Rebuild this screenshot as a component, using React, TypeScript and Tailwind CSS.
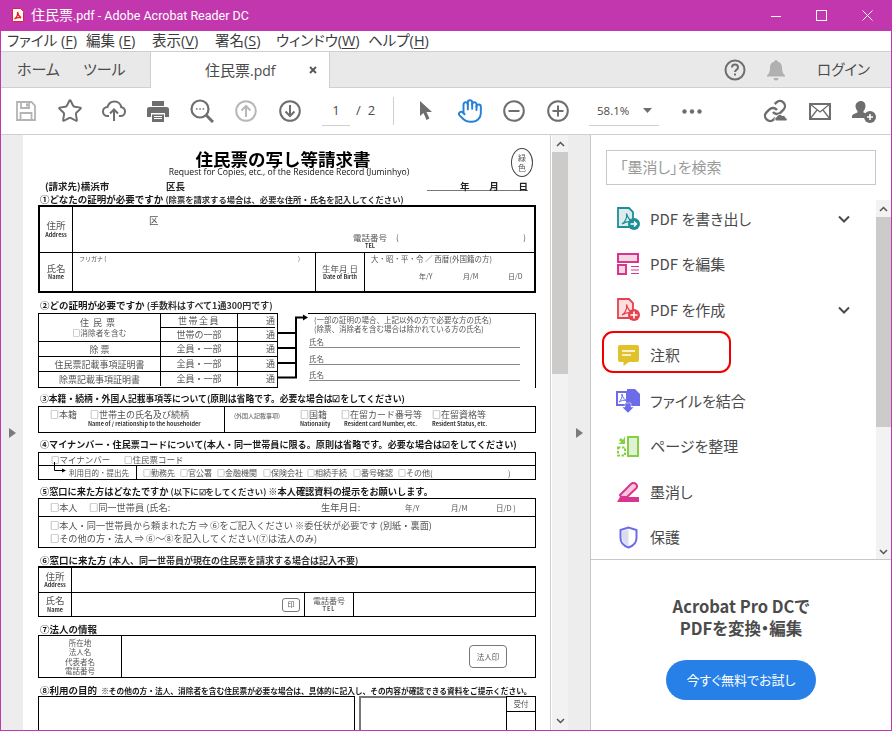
import { Star, Hand } from "lucide-react";
import type { ReactNode } from "react";

const uiFont = "font-['Open_Sans','Noto_Sans_CJK_JP',sans-serif] [font-feature-settings:'palt']";

const menus: { label: string; key: string; width: string }[] = [
  { label: "ファイル (", key: "F", width: "w-[79px]" },
  { label: "編集 (", key: "E", width: "w-[66px]" },
  { label: "表示(", key: "V", width: "w-[63px]" },
  { label: "署名(", key: "S", width: "w-[61px]" },
  { label: "ウィンドウ(", key: "W", width: "w-[92px]" },
  { label: "ヘルプ(", key: "H", width: "w-[60px]" },
];

function Swoosh({ color }: { color: string }) {
  return <path d="M9.500 6.500c1 5-2 9-4.500 10.500 3-2 6.500-3 10-2.500-2.500-1.500-4.500-4.500-5.500-8z" fill="none" stroke={color} strokeWidth="1.200" />;
}

function ToolSlot({ children }: { children: ReactNode }) {
  return <div className="flex h-full w-[44px] shrink-0 items-center justify-center">{children}</div>;
}

function TitleBar() {
  return (
    <div className="flex h-[31px] items-center bg-[#c237ae] text-white">
      <svg className="ml-[11px] mt-[-1px]" width="12" height="14" viewBox="0 0 12 14">
        <path d="M0.500 0.500h8l3 3v10h-11z" fill="#fff" stroke="#e8222a" />
        <path d="M5.500 4c.6 3-1 5.500-3 7 2-1.300 4-1.800 6.500-1.300-1.700-1-3-3-3.500-5.700z" fill="none" stroke="#e8222a" strokeWidth="1.400" />
      </svg>
      <span className="ml-[7px] font-['Roboto','Noto_Sans_CJK_JP',sans-serif] text-[12.500px] leading-none">
        <span className="text-[14px]">住民票</span>.pdf - Adobe Acrobat Reader DC
      </span>
      <div className="ml-auto mr-[18px] flex items-center">
        <svg width="10" height="10" viewBox="0 0 10 10"><path d="M0 5.500h10" stroke="#fff" /></svg>
        <svg className="ml-[35px]" width="11" height="11" viewBox="0 0 11 11"><rect x="0.500" y="0.500" width="10" height="10" fill="none" stroke="#fff" /></svg>
        <svg className="ml-[35px]" width="11" height="11" viewBox="0 0 11 11"><path d="M0.500 0.500l10 10M10.500 0.500l-10 10" stroke="#fff" /></svg>
      </div>
    </div>
  );
}

function MenuBar() {
  return (
    <div className="flex h-[20px] items-center bg-white pl-[6px] text-[14.500px] leading-none text-[#3c3c3c]">
      {menus.map((m) => (
        <span className={`${m.width} shrink-0 whitespace-nowrap`} key={m.key}>
          {m.label}
          <span className="underline underline-offset-2">{m.key}</span>)
        </span>
      ))}
    </div>
  );
}

function TabBar() {
  return (
    <div className="flex h-[37px] border-t border-t-[#cfcfcf] bg-[#e9e9e9]">
      <div className="flex w-[149px] items-center border-b border-b-[#cfcfcf] pl-[16px] text-[15px] text-[#4b4b4b]">
        <span className="w-[66px]">ホーム</span>
        <span>ツール</span>
      </div>
      <div className="flex w-[180px] items-center border-x border-x-[#cfcfcf] bg-white pl-[54px] text-[15px] text-[#4b4b4b]">
        <span>住民票<span className="text-[14px]">.pdf</span></span>
        <svg className="ml-[33px]" width="8" height="8" viewBox="0 0 8 8"><path d="M1 1l6 6M7 1l-6 6" stroke="#555" strokeWidth="1.800" /></svg>
      </div>
      <div className="flex flex-1 items-center border-b border-b-[#cfcfcf] text-[15px] text-[#4b4b4b]">
        <svg className="ml-[394px]" width="22" height="22" viewBox="0 0 22 22">
          <circle cx="11" cy="11" r="9.500" fill="none" stroke="#6e6e6e" strokeWidth="2" />
          <path d="M8 8.500c0-4 6-4 6 0 0 2.500-3 2.300-3 4.500" fill="none" stroke="#6e6e6e" strokeWidth="2" />
          <rect x="10" y="14.500" width="2" height="2" fill="#6e6e6e" />
        </svg>
        <svg className="ml-[21px]" width="18" height="22" viewBox="0 0 18 22">
          <path d="M9 1c1 0 1.500.7 1.500 1.500C14 3.500 15 6 15 9c0 4 1 5.500 3 7.500v1H0v-1c2-2 3-3.500 3-7.500 0-3 1-5.500 4.500-6.500C7.500 1.700 8 1 9 1z" fill="#b0b0b0" />
          <path d="M6.500 19h5c0 1.500-1 2.500-2.500 2.500S6.500 20.500 6.500 19z" fill="#b0b0b0" />
        </svg>
        <span className="ml-[32px] whitespace-nowrap text-[14.500px]">ログイン</span>
      </div>
    </div>
  );
}

function Toolbar() {
  const gray = "#6e6e6e";
  return (
    <div className="flex h-[47px] border-b border-b-[#cfcfcf] bg-white pl-[3px]">
      <ToolSlot>
        <svg width="20" height="20" viewBox="0 0 20 20">
          <path d="M1 1h14.500L19 4.500V19H1z" fill="none" stroke="#b4b4b4" strokeWidth="1.800" />
          <path d="M5 1v6h8V1M4.500 19v-7h11v7" fill="none" stroke="#b4b4b4" strokeWidth="1.800" />
          <rect x="10" y="2.500" width="2" height="3" fill="#b4b4b4" />
        </svg>
      </ToolSlot>
      <ToolSlot><Star size={26} strokeWidth={1.800} color={gray} /></ToolSlot>
      <ToolSlot>
        <svg width="24" height="22" viewBox="0 0 24 22">
          <path d="M7 16H5.500C3 16 1 14 1 11.500S3 7 5.500 7C6.500 3.500 9 1.500 12.500 1.500c3.700 0 6.300 2.500 6.700 5.700 2.300.3 3.800 2 3.800 4.300 0 2.500-2 4.500-4.500 4.500H17" fill="none" stroke={gray} strokeWidth="2" />
          <path d="M12 21V10M8 13.500L12 9.500l4 4" fill="none" stroke={gray} strokeWidth="2" />
        </svg>
      </ToolSlot>
      <ToolSlot>
        <svg width="22" height="21" viewBox="0 0 22 21">
          <path d="M5 0h12v5H5z" fill={gray} />
          <path d="M2.500 6h17A2.500 2.500 0 0 1 22 8.500V16h-4v-4H4v4H0V8.500A2.500 2.500 0 0 1 2.500 6z" fill={gray} />
          <path d="M5 13.500h12V21H5z" fill={gray} />
          <path d="M7 15.500h8M7 17.500h8" stroke="#fff" />
        </svg>
      </ToolSlot>
      <ToolSlot>
        <svg width="24" height="24" viewBox="0 0 24 24">
          <circle cx="10" cy="10" r="8.500" fill="none" stroke={gray} strokeWidth="2.200" />
          <path d="M16 16l7 7" stroke={gray} strokeWidth="3" />
          <path d="M6 10h1.500M9.300 10h1.500M12.600 10h1.500" stroke={gray} strokeWidth="1.500" />
        </svg>
      </ToolSlot>
      <ToolSlot>
        <svg width="22" height="22" viewBox="0 0 22 22">
          <circle cx="11" cy="11" r="9.800" fill="none" stroke="#b8b8b8" strokeWidth="2" />
          <path d="M11 17V6M6.500 10.500L11 6l4.500 4.500" fill="none" stroke="#b8b8b8" strokeWidth="2" />
        </svg>
      </ToolSlot>
      <ToolSlot>
        <svg width="22" height="22" viewBox="0 0 22 22">
          <circle cx="11" cy="11" r="9.800" fill="none" stroke={gray} strokeWidth="2" />
          <path d="M11 5v11M6.500 11.500L11 16l4.500-4.500" fill="none" stroke={gray} strokeWidth="2" />
        </svg>
      </ToolSlot>
      <div className="flex h-full w-[81px] shrink-0 items-center text-[13px] text-[#4b4b4b]">
        <div className="ml-[10px] mt-[1px] flex h-[28px] w-[28px] items-center justify-center border-b border-b-[#cfcfcf] pb-[1px]">1</div>
        <span className="ml-[6px]">/</span>
        <span className="ml-[7px]">2</span>
      </div>
      <div className="my-[9px] w-px shrink-0 bg-[#cfcfcf]" />
      <div className="w-[10px] shrink-0" />
      <ToolSlot>
        <svg width="14" height="20" viewBox="0 0 14 20"><path d="M1 0v15l3.500-3 3 7 3-1.500-3-6.500H13z" fill={gray} /></svg>
      </ToolSlot>
      <ToolSlot><Hand size={26} strokeWidth={1.800} color="#2680d8" /></ToolSlot>
      <ToolSlot>
        <svg width="22" height="22" viewBox="0 0 22 22">
          <circle cx="11" cy="11" r="9.800" fill="none" stroke={gray} strokeWidth="2" />
          <path d="M5.500 11h11" stroke={gray} strokeWidth="2" />
        </svg>
      </ToolSlot>
      <ToolSlot>
        <svg width="22" height="22" viewBox="0 0 22 22">
          <circle cx="11" cy="11" r="9.800" fill="none" stroke={gray} strokeWidth="2" />
          <path d="M5.500 11h11M11 5.500v11" stroke={gray} strokeWidth="2" />
        </svg>
      </ToolSlot>
      <div className="flex h-full w-[90px] shrink-0 items-center">
        <div className="ml-[9px] mt-[1px] flex h-[28px] w-[70px] items-center border-b border-b-[#cfcfcf] pb-[1px] pl-[8px] text-[11.500px] text-[#4b4b4b]">
          58.1%
          <svg className="ml-[14px]" width="9" height="5" viewBox="0 0 9 5"><path d="M0 0h9L4.500 5z" fill={gray} /></svg>
        </div>
      </div>
      <ToolSlot>
        <svg width="20" height="5" viewBox="0 0 20 5">
          <circle cx="2.500" cy="2.500" r="2.200" fill={gray} />
          <circle cx="10" cy="2.500" r="2.200" fill={gray} />
          <circle cx="17.500" cy="2.500" r="2.200" fill={gray} />
        </svg>
      </ToolSlot>
      <div className="w-[40px] shrink-0" />
      <ToolSlot>
        <svg width="26" height="24" viewBox="0 0 26 24">
          <g fill="none" stroke={gray} strokeWidth="2.400">
            <path d="M10 13a5 5 0 0 0 7.540.54l3-3a5 5 0 0 0-7.070-7.070l-1.720 1.710" />
            <path d="M14 11a5 5 0 0 0-7.540-.54l-3 3a5 5 0 0 0 7.070 7.070l1.710-1.710" />
          </g>
          <path d="M14 22c-2.500 0-3-3.500-.5-4 .5-2.500 4-3.500 5.500-1.500 1.500-.5 3.500.5 3.500 2 2 .3 2.500 3.500 0 3.500z" fill={gray} stroke="#fff" />
        </svg>
      </ToolSlot>
      <ToolSlot>
        <svg width="22" height="17" viewBox="0 0 22 17">
          <rect x="1" y="1" width="20" height="15" fill="none" stroke={gray} strokeWidth="2" />
          <path d="M1 1l10 8 10-8M1 16l7-9M21 16l-7-9" fill="none" stroke={gray} strokeWidth="1.300" />
        </svg>
      </ToolSlot>
      <ToolSlot>
        <svg width="24" height="23" viewBox="0 0 24 23">
          <path d="M9 1c3 0 4.500 2.500 4.500 5 0 2-1 4-2 5v1.500l2.500 1c-1.500 1.500-1.800 3-1.500 4.500H0v-2c0-1.500 4-3 5.500-3.500V11c-1-1-2-3-2-5 0-2.500 2.500-5 5.500-5z" fill={gray} />
          <circle cx="18" cy="17" r="6" fill={gray} />
          <path d="M15 17h6M18 14v6" stroke="#fff" strokeWidth="1.600" />
        </svg>
      </ToolSlot>
    </div>
  );
}

function SideArrow() {
  return <svg width="7" height="10" viewBox="0 0 7 10"><path d="M0 0l7 5-7 5z" fill="#7a7a7a" /></svg>;
}

function Heading({ children, className = "" }: { children: ReactNode; className?: string }) {
  return <div className={`whitespace-nowrap pl-[2px] font-bold leading-none text-[#1a1a1a] ${className}`}>{children}</div>;
}

function Small({ children, className = "text-[8.300px]" }: { children: ReactNode; className?: string }) {
  return <span className={`${className} font-semibold text-[#333]`}>{children}</span>;
}

function Label({ ja, en }: { ja: string; en: string }) {
  return (
    <div className="flex flex-col items-center leading-none">
      <span className="text-[9.500px] text-[#555]">{ja}</span>
      <span className="mt-[2px] text-[5.500px] font-bold text-[#333]">{en}</span>
    </div>
  );
}

function En({ children, className = "" }: { children: ReactNode; className?: string }) {
  return <span className={`mt-[3px] block whitespace-nowrap text-[5.500px] font-bold text-[#333] ${className}`}>{children}</span>;
}

function LeftRow({ name, who }: { name: string; who: string }) {
  return (
    <div className="flex h-[15px] border-t border-t-black">
      <div className="flex w-[122px] items-center justify-center border-r border-r-black text-[9px] leading-none text-[#555]">{name}</div>
      <div className="flex w-[77px] items-center justify-center border-r border-r-black text-[9px] text-[#555]">{who}</div>
      <div className="flex flex-1 items-center justify-end pr-[2px] text-[9px] text-[#555]">通</div>
    </div>
  );
}

function NameLine() {
  return <div className="ml-[1px] mr-[15px] h-[15px] border-b border-b-[#888] pt-[4px] text-[7.500px] leading-[10px] text-[#555]">氏名</div>;
}

function Document() {
  return (
    <div className="h-full w-[527px] shrink-0 overflow-hidden bg-white pl-[15px] blur-[0.3px] [font-feature-settings:normal]">
      <div className="flex h-[46px] w-[498px] pt-[15px]">
        <div className="flex w-[473px] flex-col items-center pl-[17px] leading-none">
          <span className="text-[17.500px] font-bold text-black">住民票の写し等請求書</span>
          <span className="whitespace-nowrap pl-[12px] font-['Open_Sans'] text-[8.600px] font-medium text-[#111]">Request for Copies, etc., of the Residence Record (Juminhyo)</span>
        </div>
        <div className="mt-[-2px] flex h-[29px] w-[22px] flex-col items-center justify-center rounded-[50%] border border-[#444] text-[8px] leading-[10px] text-[#555]">
          <span>緑</span>
          <span>色</span>
        </div>
      </div>
      <div className="flex h-[14px] w-[498px] items-start text-[9.500px] font-bold leading-[10px] text-[#222]">
        <span className="ml-[7px] w-[121px]">(請求先)横浜市</span>
        <span className="w-[261px]">区長</span>
        <div className="flex h-[10px] w-[101px] justify-between border-b border-b-[#777] pl-[33px]">
          <span>年</span><span>月</span><span>日</span>
        </div>
      </div>
      <Heading className="h-[10px] text-[9.500px]">①どなたの証明が必要ですか <Small>(除票を請求する場合は、必要な住所・氏名を記入してください)</Small></Heading>
      <div className="w-[498px] border-2 border-black">
        <div className="flex h-[46px] border-b border-b-black">
          <div className="flex w-[33px] items-center justify-center border-r border-r-black"><Label ja="住所" en="Address" /></div>
          <div className="flex-1 text-[#555]">
            <span className="ml-[76px] mt-[9px] block text-[9.500px] leading-none">区</span>
            <div className="ml-[279px] mt-[7px] flex">
              <div className="flex w-[36px] flex-col items-center leading-none">
                <span className="whitespace-nowrap text-[8.500px]">電話番号</span>
                <span className="mt-[3px] text-[5.500px] font-bold text-[#333]">TEL</span>
              </div>
              <div className="ml-[8px] flex w-[130px] justify-between text-[8px] leading-none"><span>(</span><span>)</span></div>
            </div>
          </div>
        </div>
        <div className="flex h-[38px]">
          <div className="flex w-[33px] items-center justify-center border-r border-r-black"><Label ja="氏名" en="Name" /></div>
          <div className="flex w-[243px] justify-between border-r border-r-black pl-[6px] pr-[15px] pt-[1px] text-[6px] leading-[10px] text-[#555]">
            <span>フリガナ (</span><span>)</span>
          </div>
          <div className="flex w-[49px] flex-col items-center justify-center border-r border-r-black leading-none">
            <span className="text-[8.500px] text-[#555]">生年月 日</span>
            <span className="mt-[3px] whitespace-nowrap text-[5.500px] font-bold text-[#333]">Date of Birth</span>
          </div>
          <div className="flex-1 pl-[6px] pt-[1px] text-[#555]">
            <div className="whitespace-nowrap text-[7.500px] leading-[10px]">大・昭・平・令 ／ 西暦(外国籍の方)</div>
            <div className="mt-[9px] flex pl-[48px] text-[7px] leading-none">
              <span className="w-[44px]">年/Y</span>
              <span className="w-[45px]">月/M</span>
              <span>日/D</span>
            </div>
          </div>
        </div>
      </div>

      <Heading className="mt-[8px] h-[12px] text-[9.500px]">②どの証明が必要ですか <Small className="text-[9px]">(手数料はすべて1通300円です)</Small></Heading>
      <div className="flex h-[75px] w-[498px]">
        <div className="w-[240px] border-x border-b border-x-black border-b-black">
          <div className="flex h-[28px] border-t border-t-black">
            <div className="flex w-[122px] flex-col items-center justify-center border-r border-r-black leading-none text-[#555]">
              <span className="text-[9px] tracking-[4px]">住民票</span>
              <span className="mt-[2px] text-[7.700px]">□消除者を含む</span>
            </div>
            <div className="w-[77px] border-r border-r-black text-center text-[9px] leading-[13px] text-[#555]">
              <div className="h-[14px] border-b border-b-black tracking-[1.500px]">世帯全員</div>
              <div>世帯の一部</div>
            </div>
            <div className="flex-1 pr-[2px] text-right text-[9px] leading-[13px] text-[#555]">
              <div className="h-[14px] border-b border-b-black">通</div>
              <div>通</div>
            </div>
          </div>
          <LeftRow name="除 票" who="全員・一部" />
          <LeftRow name="住民票記載事項証明書" who="全員・一部" />
          <LeftRow name="除票記載事項証明書" who="全員・一部" />
        </div>
        <svg className="shrink-0" width="30" height="75" viewBox="0 0 30 75">
          <path d="M0 20h18M0 35h18M0 50h18M0 64.500h18M18 65.500V4.500h8" fill="none" stroke="#000" strokeWidth="2" />
          <path d="M25 1.500l5 3-5 3z" fill="#000" />
        </svg>
        <div className="flex-1 border-r border-t border-black">
          <div className="pl-[6px] pt-[1px] text-[7.500px] leading-[9px] text-[#555]">
            <div className="whitespace-nowrap">(一部の証明の場合、上記以外の方で必要な方の氏名)</div>
            <div className="whitespace-nowrap">(除票、消除者を含む場合は除かれている方の氏名)</div>
          </div>
          <NameLine />
          <div className="mt-[2px]"><NameLine /></div>
          <div className="mt-[1px]"><NameLine /></div>
        </div>
      </div>

      <Heading className="mt-[7px] h-[11px] text-[8.800px]">③本籍・続柄・外国人記載事項等について(原則は省略です。必要な場合は☑をしてください)</Heading>
      <div className="flex h-[27px] w-[498px] border border-black text-[9px] leading-none text-[#555]">
        <div className="w-[186px] border-r border-r-black pl-[11px] pt-[3px]">
          <span>□本籍</span>
          <span className="ml-[13px]">□世帯主の氏名及び続柄</span>
          <En className="ml-[38px]">Name of / relationship to the householder</En>
        </div>
        <div className="flex flex-1 pl-[9px] pt-[3px]">
          <span className="w-[48px] whitespace-nowrap pt-[3px] text-[6px]">(外国人記載事項)</span>
          <div className="ml-[18px] w-[40px]">□国籍<En>Nationality</En></div>
          <div className="w-[92px] pl-[1px]">□在留カード番号等<En className="pl-[3px]">Resident card Number, etc.</En></div>
          <div>□在留資格等<En>Resident Status, etc.</En></div>
        </div>
      </div>

      <Heading className="mt-[7px] h-[12px] text-[9.100px]">④マイナンバー・住民票コードについて(本人・同一世帯員に限る。原則は省略です。必要な場合は☑をしてください)</Heading>
      <div className="w-[498px] border border-black text-[#555]">
        <div className="flex h-[13px] items-center border-b border-b-black pl-[12px] text-[8.500px]">
          <span className="w-[73px]">□マイナンバー</span>
          <span>□住民票コード</span>
        </div>
        <div className="flex h-[13px] items-center text-[8px]">
          <div className="flex h-full w-[98px] items-center border-r border-r-black">
            <svg className="ml-[15px] mt-[-8px] shrink-0" width="12" height="13" viewBox="0 0 12 13"><path d="M0.500 0v8.500H9" fill="none" stroke="#000" /><path d="M8 6.500l4 2-4 2z" fill="#000" /></svg>
            <span className="ml-[3px] whitespace-nowrap text-[7.500px]">利用目的・提出先</span>
          </div>
          <div className="flex flex-1 whitespace-nowrap pl-[6px]">
            <span className="w-[37px]">□勤務先</span>
            <span className="w-[37px]">□官公署</span>
            <span className="w-[46px]">□金融機関</span>
            <span className="w-[44px]">□保険会社</span>
            <span className="w-[46px]">□相続手続</span>
            <span className="w-[45px]">□番号確認</span>
            <span className="w-[34px]">□その他(</span>
            <span className="ml-[76px]">)</span>
          </div>
        </div>
      </div>

      <Heading className="mt-[7px] h-[11px] text-[9.200px]">⑤窓口に来た方はどなたですか <Small>(以下に☑をしてください)</Small> ※本人確認資料の提示をお願いします。</Heading>
      <div className="w-[498px] border border-black text-[9.200px] text-[#555]">
        <div className="flex h-[18px] items-center border-b border-b-black pl-[11px]">
          <span className="w-[39px]">□本人</span>
          <span className="w-[232px]">□同一世帯員 (氏名:</span>
          <span className="w-[84px]">生年月日:</span>
          <span className="w-[46px] text-[7.500px]">年/Y</span>
          <span className="w-[45px] text-[7.500px]">月/M</span>
          <span className="text-[7.500px]">日/D )</span>
        </div>
        <div className="h-[30px] pl-[11px] pt-[2px] leading-[13px]">
          <div className="whitespace-nowrap">□本人・同一世帯員から頼まれた方 ⇒ ⑥をご記入ください ※委任状が必要です (別紙・裏面)</div>
          <div className="whitespace-nowrap">□その他の方・法人 ⇒ ⑥〜⑧を記入してください(⑦は法人のみ)</div>
        </div>
      </div>

      <Heading className="mt-[8px] h-[10px] text-[9.500px]">⑥窓口に来た方 <Small className="text-[9px]">(本人、同一世帯員が現在の住民票を請求する場合は記入不要)</Small></Heading>
      <div className="w-[498px] border border-t-2 border-black">
        <div className="flex h-[25px] border-b border-b-black">
          <div className="flex w-[33px] items-center justify-center border-r border-r-black"><Label ja="住所" en="Address" /></div>
        </div>
        <div className="flex h-[23px]">
          <div className="flex w-[33px] items-center justify-center border-r border-r-black"><Label ja="氏名" en="Name" /></div>
          <div className="flex w-[233px] items-center justify-end border-r border-r-black pr-[4px]">
            <span className="flex h-[14px] w-[18px] items-center justify-center rounded-[3px] border border-[#777] text-[7px] text-[#555]">印</span>
          </div>
          <div className="flex w-[49px] flex-col items-center justify-center border-r border-r-black leading-none text-[#555]">
            <span className="text-[8px]">電話番号</span>
            <span className="mt-[2px] text-[5.500px] font-bold tracking-[1px]">TEL</span>
          </div>
        </div>
      </div>

      <Heading className="mt-[8px] h-[10px] text-[9.500px]">⑦法人の情報</Heading>
      <div className="flex h-[43px] w-[498px] border border-black">
        <div className="flex w-[83px] flex-col items-center justify-center border-r border-r-black text-[7.500px] leading-[9.500px] text-[#555]">
          <span>所在地</span><span>法人名</span><span>代表者名</span><span>電話番号</span>
        </div>
        <div className="flex flex-1 items-center justify-end pr-[28px]">
          <span className="flex h-[23px] w-[38px] items-center justify-center rounded-[4px] border border-[#777] text-[7.500px] text-[#555]">法人印</span>
        </div>
      </div>

      <Heading className="mt-[8px] h-[10px] text-[9.500px]">⑧利用の目的 <span className="ml-[2px] text-[7.700px] font-semibold">※その他の方・法人、消除者を含む住民票が必要な場合は、具体的に記入し、その内容が確認できる資料をご提示ください。</span></Heading>
      <div className="flex h-[40px] w-[498px]">
        <div className="w-[317px] border-x border-t border-black" />
        <div className="ml-[4px] w-[147px] border-l-2 border-t-2 border-[#777]" />
        <div className="w-[30px] border-x border-t border-black">
          <div className="flex h-[15px] items-center justify-center border-b border-b-black text-[7.500px] text-[#555]">受付</div>
        </div>
      </div>
    </div>
  );
}

function ScrollArrow({ down }: { down?: boolean }) {
  return (
    <svg width="9" height="6" viewBox="0 0 9 6">
      <path d={down ? "M1 1l3.500 3.500L8 1" : "M1 5l3.500-3.500L8 5"} fill="none" stroke="#555" strokeWidth="1.500" />
    </svg>
  );
}

function Swatch({ children }: { children: ReactNode }) {
  return <div className="flex h-[26px] w-[24px] shrink-0 items-center justify-center">{children}</div>;
}

const tools: { label: string; chevron?: boolean; icon: ReactNode }[] = [
  {
    label: "PDF を書き出し",
    chevron: true,
    icon: (
      <svg width="23" height="23" viewBox="0 0 23 23">
        <path d="M1 1h11l4 4v15H1z" fill="#dcecec" stroke="#1f8f96" strokeWidth="1.800" />
        <Swoosh color="#1f8f96" />
        <circle cx="17" cy="17" r="6" fill="#1f8f96" />
        <path d="M13.500 17h6M17 14.500l2.500 2.500-2.500 2.500" fill="none" stroke="#fff" strokeWidth="1.400" />
      </svg>
    ),
  },
  {
    label: "PDF を編集",
    icon: (
      <svg width="23" height="22" viewBox="0 0 23 22">
        <rect x="1" y="1" width="20" height="8" fill="#f7d6e6" stroke="#d9358f" strokeWidth="2" />
        <rect x="1" y="12" width="8" height="9" fill="#f7d6e6" stroke="#d9358f" strokeWidth="2" />
        <path d="M14 13.500h8M14 17h8M14 20.500h8" stroke="#d9358f" />
      </svg>
    ),
  },
  {
    label: "PDF を作成",
    chevron: true,
    icon: (
      <svg width="23" height="23" viewBox="0 0 23 23">
        <path d="M1 1h11l4 4v15H1z" fill="#fbdfe0" stroke="#e5424d" strokeWidth="1.800" />
        <Swoosh color="#e5424d" />
        <circle cx="17" cy="17" r="6" fill="#e5424d" />
        <path d="M13.500 17h7M17 13.500v7" stroke="#fff" strokeWidth="1.600" />
      </svg>
    ),
  },
  {
    label: "注釈",
    icon: (
      <svg width="21" height="21" viewBox="0 0 21 21">
        <path d="M2 0h17a2 2 0 0 1 2 2v13a2 2 0 0 1-2 2H11l-5.500 4v-4H2a2 2 0 0 1-2-2V2a2 2 0 0 1 2-2z" fill="#e2c22a" />
        <path d="M4 6h13M4 10h9" stroke="#fff" strokeWidth="1.500" />
      </svg>
    ),
  },
  {
    label: "ファイルを結合",
    icon: (
      <svg width="24" height="24" viewBox="0 0 24 24">
        <path d="M1 3h10v13H1z" fill="#fff" stroke="#6c6ce8" strokeWidth="2" />
        <path d="M6 5c.3 3-.8 6-3 8 2.500-1.500 4-2 7-1.700-2-1-3.300-3-4-6.300z" fill="none" stroke="#6c6ce8" />
        <path d="M11 0h8l5 5v12H11z" fill="#6c6ce8" />
        <path d="M9 14h6v4h3l-6 6-6-6h3z" fill="#6c6ce8" stroke="#fff" strokeWidth="0.500" />
      </svg>
    ),
  },
  {
    label: "ページを整理",
    icon: (
      <svg width="22" height="21" viewBox="0 0 22 21">
        <rect x="11" y="1" width="10" height="19" fill="#dff2d5" stroke="#84d13f" strokeWidth="2" />
        <path d="M1 11.500h7v8H1z" fill="none" stroke="#84d13f" strokeWidth="2" strokeDasharray="2.500 1.500" />
        <path d="M8 0v8H1l3-2-2-2 2-2 2 2z" fill="#84d13f" />
      </svg>
    ),
  },
  {
    label: "墨消し",
    icon: (
      <svg width="23" height="20" viewBox="0 0 23 20">
        <path d="M3 13L14 2c1.500-1.500 3.500-1.500 5 0s1.500 3 0 4.500L10 15H4z" fill="#f6c8de" stroke="#d9358f" strokeWidth="2" />
        <path d="M0 20l3-5h19v5z" fill="#d9358f" />
      </svg>
    ),
  },
  {
    label: "保護",
    icon: (
      <svg width="19" height="23" viewBox="0 0 19 23">
        <path d="M9.500 1.500L1.500 4v8c0 4.500 3.500 8 8 9.500 4.500-1.500 8-5 8-9.500V4z" fill="none" stroke="#6c6ce8" strokeWidth="2" />
        <path d="M9.500 3.500L3 5.500V12c0 3.500 2.800 6.500 6.500 8z" fill="#dcdcf0" />
      </svg>
    ),
  },
];

function RightPanel() {
  return (
    <div className="flex w-[301px] shrink-0 flex-col border-l border-l-[#c8c8c8] bg-white">
      <div className="h-[65px] shrink-0 pl-[15px] pt-[15px]">
        <div className="flex h-[35px] w-[270px] items-center border border-[#c8c8c8] pl-[13px] text-[15px] text-[#9a9a9a]">「墨消し」を検索</div>
      </div>
      <div className="flex h-[359px] shrink-0">
        <div className="relative flex-1 overflow-hidden">
          <div className="mt-[-4px]">
            {tools.map((tool) => (
              <div className="flex h-[45.500px] items-center pl-[25px] text-[15px] text-[#4b4b4b]" key={tool.label}>
                <Swatch>{tool.icon}</Swatch>
                <span className="ml-[10px] whitespace-nowrap">{tool.label}</span>
                {tool.chevron ? (
                  <svg className="ml-auto mr-[26px]" width="12" height="8" viewBox="0 0 12 8"><path d="M1 1.500l5 5 5-5" fill="none" stroke="#4b4b4b" strokeWidth="2" /></svg>
                ) : null}
              </div>
            ))}
          </div>
          <div className="absolute left-[11px] top-[131px] h-[42px] w-[129px] rounded-[11px] border-2 border-[#f00000]" />
        </div>
        <div className="flex w-[15px] shrink-0 flex-col items-center bg-[#f2f2f2]">
          <div className="flex h-[17px] w-full items-center justify-center"><ScrollArrow /></div>
          <div className="h-[210px] w-full bg-[#cdcbc9]" />
          <div className="flex-1" />
          <div className="flex h-[14px] w-full items-center justify-center"><ScrollArrow down /></div>
        </div>
      </div>
      <div className="flex flex-1 flex-col items-center border-t border-t-[#c8c8c8] pt-[35px]">
        <div className="text-center text-[16.500px] font-bold leading-[22px] text-[#4b4b4b]">
          <div>Acrobat Pro DCで</div>
          <div>PDFを変換・編集</div>
        </div>
        <div className="mt-[21px] flex h-[40px] w-[150px] items-center justify-center rounded-full bg-[#2680e8] text-[13px] text-white">今すぐ無料でお試し</div>
      </div>
    </div>
  );
}

export default function App() {
  return (
    <div className={`flex h-[731px] w-[892px] flex-col overflow-hidden border-x border-b border-x-[#c237ae] border-b-[#c237ae] bg-white ${uiFont}`}>
      <TitleBar />
      <MenuBar />
      <TabBar />
      <Toolbar />
      <div className="flex min-h-0 flex-1 font-['Noto_Sans_CJK_JP','Open_Sans',sans-serif]">
        <div className="flex w-[22px] shrink-0 items-center justify-center bg-[#ededed]"><SideArrow /></div>
        <Document />
        <div className="w-[0px] flex-1 border-l border-l-[#cfcfcf] bg-white" />
        <div className="flex w-[16px] shrink-0 flex-col items-center bg-[#f2f2f2]">
          <div className="flex h-[17px] w-full items-center justify-center"><ScrollArrow /></div>
          <div className="h-[222px] w-full bg-[#cdcbc9]" />
          <div className="flex-1" />
          <div className="flex h-[18px] w-full items-center justify-center"><ScrollArrow down /></div>
        </div>
        <div className="flex w-[22px] shrink-0 items-center justify-center bg-[#ededed]"><SideArrow /></div>
        <RightPanel />
      </div>
    </div>
  );
}
